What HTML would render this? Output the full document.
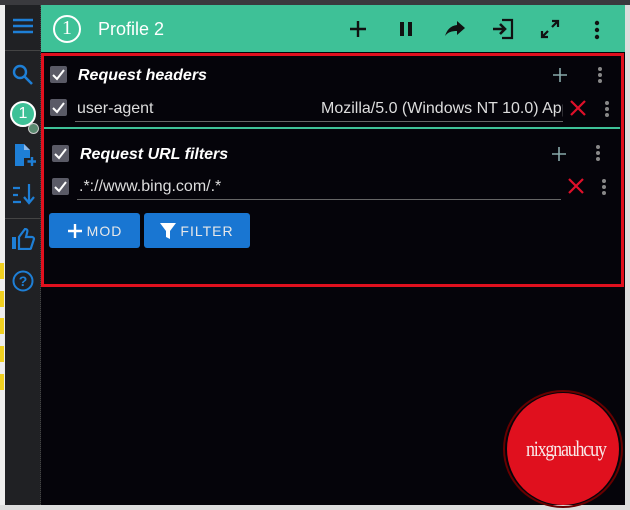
<!DOCTYPE html>
<html><head><style>
*{margin:0;padding:0;box-sizing:border-box}
body{width:630px;height:510px;background:#05040a;position:relative;overflow:hidden;font-family:"Liberation Sans",sans-serif;color:#ddd}
.a{position:absolute}
.cb{position:absolute;width:17px;height:17px;background:#5a5a66;border-radius:2px}
.cb svg{position:absolute;left:2px;top:2px}
.t{position:absolute;font-weight:bold;font-style:italic;color:#fff;font-size:16px}
.in{position:absolute;font-size:16px;color:#ddd;border-bottom:1px solid #666;height:24px;line-height:22px;white-space:nowrap;overflow:hidden}
.btn{position:absolute;background:#1976d2;border-radius:3px;color:#e8e8e8;font-size:14px;letter-spacing:1px;display:flex;align-items:center;justify-content:center;gap:4px}
</style></head><body>
<div class="a" style="left:0;top:0;width:630px;height:5px;background:#3a3a3e"></div>
<div class="a" style="left:0;top:5px;width:5px;height:505px;background:#eee"></div>
<div class="a" style="left:0;top:263px;width:4px;height:16px;background:#f0d020"></div>
<div class="a" style="left:0;top:291px;width:4px;height:16px;background:#f0d020"></div>
<div class="a" style="left:0;top:318px;width:4px;height:16px;background:#f0d020"></div>
<div class="a" style="left:0;top:346px;width:4px;height:16px;background:#f0d020"></div>
<div class="a" style="left:0;top:374px;width:4px;height:16px;background:#f0d020"></div>
<div class="a" style="left:625px;top:5px;width:5px;height:505px;background:#ddd"></div>
<div class="a" style="left:0;top:505px;width:630px;height:5px;background:#ddd"></div>
<div class="a" style="left:5px;top:5px;width:36px;height:500px;background:#202124;border-right:1px dotted #444"></div>
<div class="a" style="left:5px;top:50px;width:36px;height:1px;background:#444"></div>
<div class="a" style="left:5px;top:218px;width:36px;height:1px;background:#444"></div>
<svg class="a" style="left:12px;top:17px" width="22" height="18"><path d="M1 3h20M1 9h20M1 15h20" stroke="#1e7fd6" stroke-width="2.4"/></svg>
<svg class="a" style="left:12px;top:64px" width="22" height="22"><circle cx="8" cy="8" r="6" fill="none" stroke="#1e7fd6" stroke-width="2.4"/><path d="M12 12l8 8" stroke="#1e7fd6" stroke-width="2.6"/></svg>
<div class="a" style="left:10px;top:101px;width:26px;height:26px;border-radius:50%;background:#3ec197;border:2px solid #fff;color:#fff;font-size:16px;text-align:center;line-height:22px">1</div>
<div class="a" style="left:28px;top:123px;width:11px;height:11px;border-radius:50%;background:#5a8a70;border:1px solid #ccc"></div>
<svg class="a" style="left:14px;top:143px" width="22" height="24"><path d="M1 1h9l6 6v8h-6v8H1z" fill="#1e7fd6"/><path d="M10 1v6h6" fill="#8cb8e8"/><path d="M18 14v9M13.5 18.5h9" stroke="#1e7fd6" stroke-width="2.4"/></svg>
<svg class="a" style="left:12px;top:183px" width="24" height="22"><path d="M1 5h7M1 12h5M1 19h8M17 1v18M12 14l5 6 5-6" stroke="#1e7fd6" stroke-width="2.2" fill="none"/></svg>
<svg class="a" style="left:11px;top:228px" width="24" height="22"><path d="M1 9h4v12H1z" fill="#1e7fd6"/><path d="M8 9l6-8c2 0 3 1 2 4l-1 4h6c1 0 2 1 2 2l-3 9c0 1-1 1-2 1H8z" fill="none" stroke="#1e7fd6" stroke-width="2.2"/></svg>
<svg class="a" style="left:12px;top:270px" width="22" height="22"><circle cx="11" cy="11" r="9.5" fill="none" stroke="#1e7fd6" stroke-width="2"/><text x="11" y="16" text-anchor="middle" font-size="14" font-weight="bold" fill="#1e7fd6" font-family="Liberation Sans">?</text></svg>

<div class="a" style="left:41px;top:5px;width:584px;height:47px;background:#3ec197"></div>
<div class="a" style="left:53px;top:15px;width:28px;height:28px;border-radius:50%;border:2.5px solid #fff;color:#fff;font-family:'Liberation Serif',serif;font-size:20px;text-align:center;line-height:23px">1</div>
<div class="a" style="left:98px;top:19px;color:#fff;font-size:18px">Profile 2</div>
<svg class="a" style="left:349px;top:20px" width="18" height="18"><path d="M9 1v16M1 9h16" stroke="#111" stroke-width="2.4"/></svg>
<svg class="a" style="left:398px;top:20px" width="16" height="18"><path d="M2 2h4v14H2zM10 2h4v14h-4z" fill="#111"/></svg>
<svg class="a" style="left:444px;top:20px" width="22" height="18"><path d="M21 8l-8-7v4C6 6 3 10 1 16c3-4 7-5 12-5v4z" fill="#111"/></svg>
<svg class="a" style="left:492px;top:18px" width="22" height="22"><path d="M10 2h10v18H10" fill="none" stroke="#111" stroke-width="2.2"/><path d="M1 11h11M8 6l5 5-5 5" fill="none" stroke="#111" stroke-width="2.6"/></svg>
<svg class="a" style="left:540px;top:19px" width="20" height="20"><path d="M12 2h6v6M18 2l-6 6M8 18H2v-6M2 18l6-6" fill="none" stroke="#111" stroke-width="2.2"/></svg>
<svg class="a" style="left:593px;top:20px" width="8" height="20"><circle cx="4" cy="3" r="2.2" fill="#111"/><circle cx="4" cy="10" r="2.2" fill="#111"/><circle cx="4" cy="17" r="2.2" fill="#111"/></svg>

<div class="a" style="left:41px;top:53px;width:583px;height:234px;border:3px solid #e0101e"></div>
<div class="a" style="left:44px;top:127px;width:576px;height:2px;background:#3ec197"></div>

<div class="cb" style="left:50px;top:66px"><svg width="13" height="13"><path d="M1 7l4 4 7-9" fill="none" stroke="#fff" stroke-width="2"/></svg></div>
<div class="t" style="left:78px;top:67px">Request headers</div>
<svg class="a" style="left:552px;top:67px" width="16" height="16"><path d="M8 1v14M1 8h14" stroke="#8aa" stroke-width="1.6"/></svg>
<svg class="a" style="left:597px;top:66px" width="6" height="18"><circle cx="3" cy="3" r="2" fill="#888"/><circle cx="3" cy="9" r="2" fill="#888"/><circle cx="3" cy="15" r="2" fill="#888"/></svg>

<div class="cb" style="left:50px;top:99px"><svg width="13" height="13"><path d="M1 7l4 4 7-9" fill="none" stroke="#fff" stroke-width="2"/></svg></div>
<div class="in" style="left:75px;top:98px;width:488px"><span style="position:absolute;left:2px">user-agent</span><span style="position:absolute;left:246px">Mozilla/5.0 (Windows NT 10.0) Apple</span></div>
<svg class="a" style="left:570px;top:100px" width="16" height="16"><path d="M1 1l14 14M15 1L1 15" stroke="#e0102a" stroke-width="2.2"/></svg>
<svg class="a" style="left:604px;top:100px" width="6" height="18"><circle cx="3" cy="3" r="2" fill="#888"/><circle cx="3" cy="9" r="2" fill="#888"/><circle cx="3" cy="15" r="2" fill="#888"/></svg>

<div class="cb" style="left:52px;top:145px"><svg width="13" height="13"><path d="M1 7l4 4 7-9" fill="none" stroke="#fff" stroke-width="2"/></svg></div>
<div class="t" style="left:80px;top:146px">Request URL filters</div>
<svg class="a" style="left:551px;top:146px" width="16" height="16"><path d="M8 1v14M1 8h14" stroke="#8aa" stroke-width="1.6"/></svg>
<svg class="a" style="left:595px;top:144px" width="6" height="18"><circle cx="3" cy="3" r="2" fill="#888"/><circle cx="3" cy="9" r="2" fill="#888"/><circle cx="3" cy="15" r="2" fill="#888"/></svg>

<div class="cb" style="left:52px;top:178px"><svg width="13" height="13"><path d="M1 7l4 4 7-9" fill="none" stroke="#fff" stroke-width="2"/></svg></div>
<div class="in" style="left:77px;top:176px;width:484px"><span style="position:absolute;left:2px">.*://www.bing.com/.*</span></div>
<svg class="a" style="left:568px;top:178px" width="16" height="16"><path d="M1 1l14 14M15 1L1 15" stroke="#e0102a" stroke-width="2.2"/></svg>
<svg class="a" style="left:601px;top:178px" width="6" height="18"><circle cx="3" cy="3" r="2" fill="#888"/><circle cx="3" cy="9" r="2" fill="#888"/><circle cx="3" cy="15" r="2" fill="#888"/></svg>

<div class="btn" style="left:49px;top:213px;width:91px;height:35px"><svg width="16" height="16"><path d="M8 1v14M1 8h14" stroke="#fff" stroke-width="2.4"/></svg>MOD</div>
<div class="btn" style="left:144px;top:213px;width:106px;height:35px"><svg width="16" height="18"><path d="M0 1h16l-6 8v8l-4-2V9z" fill="#fff"/></svg>FILTER</div>

<div class="a" style="left:507px;top:393px;width:112px;height:112px;border-radius:50%;background:#e0101e"></div>
<div class="a" style="left:503px;top:390px;width:120px;height:118px;border-radius:50%;border:2px solid #600"></div>
<div class="a" style="left:526px;top:436px;color:#f8e8e8;font-family:'Liberation Sans Narrow','Liberation Serif',serif;font-size:22px;letter-spacing:-1.5px;transform:scaleX(0.82);transform-origin:left">nixgnauhcuy</div>
</body></html>
